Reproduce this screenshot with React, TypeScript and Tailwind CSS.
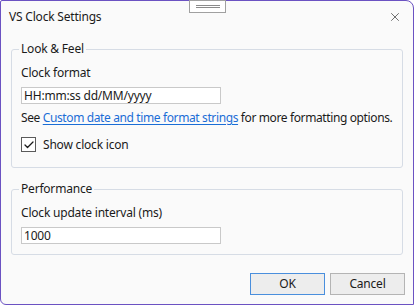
import { Check, X } from "lucide-react";

function Field({ label, value }: { label: string; value: string }) {
  return (
    <div className="flex flex-col">
      <span className="h-[16px] leading-[16px]">{label}</span>
      <div className="mt-[6px] flex h-[17px] w-[200px] items-center border border-[#c9c9c9] bg-white px-[2px] leading-none">
        {value}
      </div>
    </div>
  );
}

export default function App() {
  return (
    <div className="h-[305px] w-[414px] bg-white font-['Noto_Sans',sans-serif] text-[12px] tracking-[-0.2px] text-[#1b1b1b]">
      <div className="relative flex h-full flex-col rounded-tl-[2px] rounded-tr-[8px] rounded-bl-[6px] border border-[#6b52c2] bg-[#fafafa]">
        {/* resize grip over the top edge */}
        <div className="absolute left-[188px] top-[-1px] flex h-[13px] w-[37px] flex-col items-center justify-center gap-[1px] border border-[#a0a0a0] bg-white">
          <span className="h-px w-[24px] bg-[#8a8a8a]" />
          <span className="h-px w-[24px] bg-[#8a8a8a]" />
        </div>

        <div className="flex h-[31px] items-center justify-between pl-[8px] pr-[11px]">
          <span>VS Clock Settings</span>
          <X size={14} strokeWidth={1.2} className="text-[#333]" />
        </div>

        <div className="flex flex-col px-[10px] pt-[10px]">
          <fieldset className="h-[126px] rounded-[3px] border border-[#d6dce5] px-[9px]">
            <legend className="ml-[-2px] px-[2px] leading-[14px]">Look &amp; Feel</legend>
            <div className="pt-[9px]">
              <Field label="Clock format" value="HH:mm:ss dd/MM/yyyy" />
              <p className="mt-[6px] h-[16px] whitespace-nowrap leading-[16px] tracking-[-0.38px]">
                See{" "}
                <a className="text-[#1a6dd6] underline underline-offset-2" href="#">
                  Custom date and time format strings
                </a>{" "}
                for more formatting options.
              </p>
              <label className="mt-[11px] flex h-[15px] items-center gap-[7px]">
                <span className="flex h-[15px] w-[15px] items-center justify-center border border-[#5a5a5a] bg-white">
                  <Check size={12} strokeWidth={2.6} className="text-[#1b1b1b]" />
                </span>
                <span>Show clock icon</span>
              </label>
            </div>
          </fieldset>

          <fieldset className="mt-[14px] h-[73px] rounded-[3px] border border-[#d6dce5] px-[9px]">
            <legend className="ml-[-2px] px-[2px] leading-[14px]">Performance</legend>
            <div className="pt-[9px]">
              <Field label="Clock update interval (ms)" value="1000" />
            </div>
          </fieldset>
        </div>

        <div className="mt-auto flex justify-end gap-[5px] pb-[9px] pr-[8px]">
          <button className="h-[22px] w-[75px] border border-[#4a8fdd] bg-[#ededed]">OK</button>
          <button className="h-[22px] w-[75px] border border-[#b4b4b4] bg-[#ededed]">Cancel</button>
        </div>
      </div>
    </div>
  );
}
